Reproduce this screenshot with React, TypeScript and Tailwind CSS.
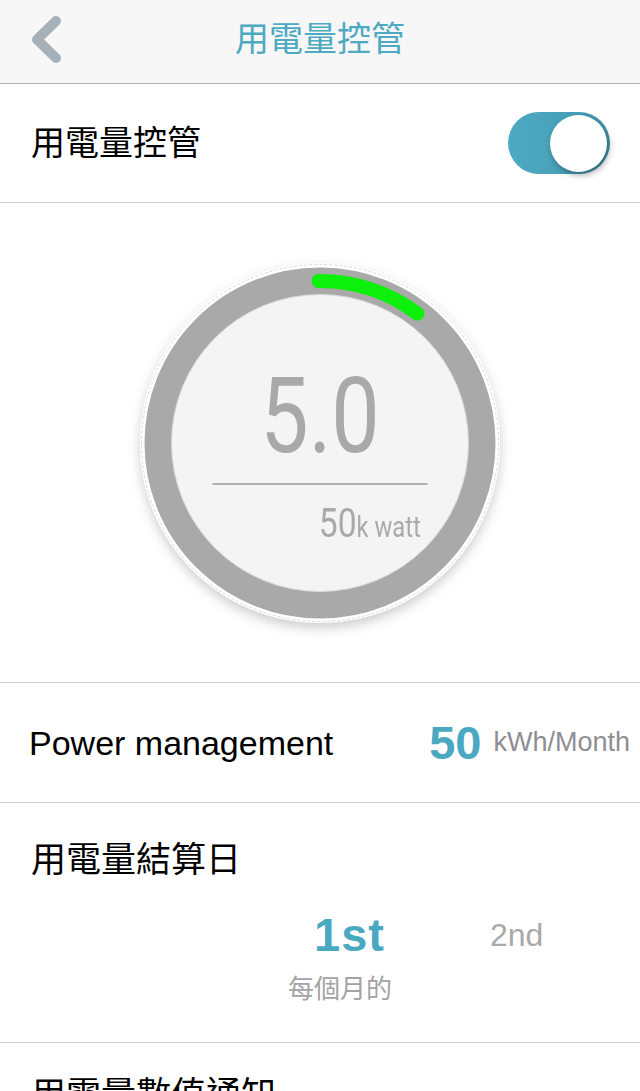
import React from "react";

const Gauge = () => (
  <div className="relative w-[400px] h-[400px]">
    <svg className="absolute inset-0" width="400" height="400" viewBox="0 0 400 400">
      <defs>
        <filter id="sh" x="-20%" y="-20%" width="140%" height="140%">
          <feDropShadow dx="0" dy="5" stdDeviation="6" floodColor="#000" floodOpacity="0.2" />
        </filter>
      </defs>
      <circle cx="200" cy="200" r="180" fill="#ffffff" filter="url(#sh)" />
      <circle cx="200" cy="200" r="178.5" fill="none" stroke="#dadada" strokeWidth="1" strokeDasharray="3 2" />
      <circle cx="200" cy="200" r="162" fill="none" stroke="#a9a9a9" strokeWidth="27" />
      <circle cx="200" cy="200" r="148.5" fill="#f3f4f3" stroke="#d6d6d6" strokeWidth="1" />
      <path
        d="M198.6 38 A162 162 0 0 1 297.5 70.6"
        fill="none"
        stroke="#0cf00c"
        strokeWidth="14"
        strokeLinecap="round"
      />
    </svg>
    <div className="absolute inset-0 flex flex-col items-center scale-x-[0.82] font-['Roboto',sans-serif] text-[#a9a9a9]">
      <div className="mt-[121px] text-[105px] leading-[105px] font-normal">5.0</div>
      <div className="mt-[14px] h-[2px] w-[262px] bg-[#b0b0b0]" />
      <div className="mt-[18px] w-[262px] flex justify-end items-baseline pr-[8px]">
        <span className="text-[41px] leading-none">50</span>
        <span className="text-[29px] leading-none">k watt</span>
      </div>
    </div>
  </div>
);

export default function App() {
  return (
    <div className="w-[640px] bg-white font-['Liberation_Sans','Noto_Sans_CJK_TC',sans-serif] text-black overflow-hidden">
      {/* Header */}
      <header className="h-[84px] bg-[#f7f7f7] border-b border-[#b5b5b5] flex items-stretch">
        <div className="w-[80px] shrink-0">
          <svg width="80" height="83" viewBox="0 0 80 83">
            <path
              d="M56 21 L37 39.5 L56 58"
              fill="none"
              stroke="#a5b0b8"
              strokeWidth="10"
              strokeLinecap="round"
              strokeLinejoin="round"
            />
          </svg>
        </div>
        <div className="flex-1 flex items-center justify-center pb-[6px] text-[34px] leading-[34px] text-[#4ea9c1]">
          用電量控管
        </div>
        <div className="w-[80px] shrink-0" />
      </header>

      {/* Toggle row */}
      <div className="h-[119px] border-b border-[#cfcfcf] flex items-center justify-between pl-[31px] pr-[30px]">
        <span className="text-[34px] leading-[34px]">用電量控管</span>
        <div className="w-[102px] h-[62px] rounded-full bg-gradient-to-r from-[#4daac2] to-[#4299b1] flex items-center justify-end pr-[3px]">
          <div className="w-[57px] h-[57px] rounded-full bg-white shadow-[2px_3px_6px_rgba(0,0,0,0.35)]" />
        </div>
      </div>

      {/* Gauge */}
      <div className="h-[480px] border-b border-[#cfcfcf] flex items-center justify-center">
        <Gauge />
      </div>

      {/* Power management */}
      <div className="h-[120px] border-b border-[#cfcfcf] flex items-center justify-between pl-[29px] pr-[10px]">
        <span className="text-[34px] leading-none">Power management</span>
        <div className="flex items-center gap-[12px]">
          <span className="text-[47px] leading-none font-bold text-[#4aa8c1]">50</span>
          <span className="text-[27px] leading-none text-[#8e8e93]">kWh/Month</span>
        </div>
      </div>

      {/* Settlement day */}
      <div className="h-[240px] border-b border-[#cfcfcf] pt-[39px]">
        <div className="pl-[31px] text-[35px] leading-[35px]">用電量結算日</div>
        <div className="mt-[34px] h-[47px] flex items-center pl-[314px] gap-[105px]">
          <span className="text-[47px] leading-none font-bold tracking-[1px] text-[#4aa8c1]">1st</span>
          <span className="text-[32px] leading-none text-[#a9a9a9]">2nd</span>
        </div>
        <div className="mt-[18px] pl-[288px] text-[26px] leading-[26px] text-[#a3a3a3]">每個月的</div>
      </div>

      {/* Next row (cut off) */}
      <div className="h-[120px] pt-[34px] pl-[31px]">
        <span className="text-[35px] leading-[35px]">用電量數值通知</span>
      </div>
    </div>
  );
}
